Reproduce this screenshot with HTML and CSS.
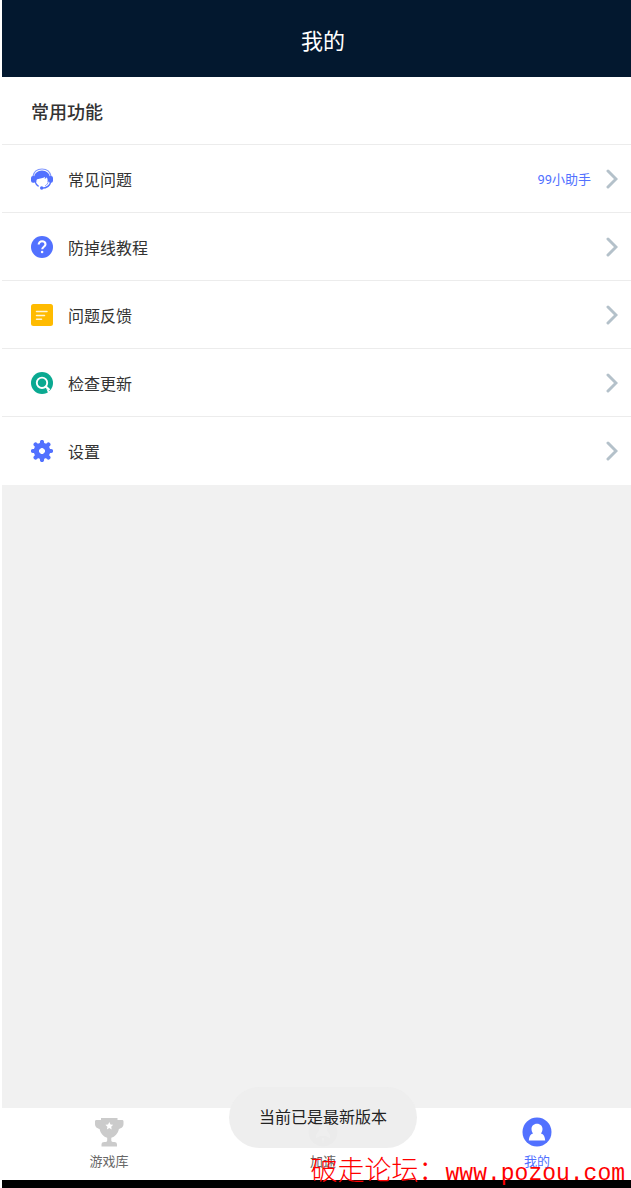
FILE: index.html
```html
<!DOCTYPE html>
<html lang="zh-CN">
<head>
    <meta charset="UTF-8">
    <meta name="viewport" content="width=device-width, initial-scale=1.0">
    <title>我的</title>
    <link rel="stylesheet" href="styles.css">
</head>
<body>
    <div class="screen">
        <header class="topbar">
            <h1>我的</h1>
        </header>
        <main class="content">
            <section class="menu">
                <h2 class="menu-title">常用功能</h2>
                <a class="menu-item" href="#faq">
                    <svg class="icon" viewBox="0 0 22 22">
                        <path d="M1.900 8.500C2.800 3.600 6.500 1 11 1s8.200 2.600 9.100 7.500" fill="none" stroke="#7f96ff" stroke-width="1.200"/>
                        <path d="M3 14V9.600C3.200 5.300 6.800 2.400 11 2.400s7.800 2.900 8 7.200V14h-2.400c.3-2-.1-3.400-.9-4.800-.5 1-1.400 1.600-2.200 1.500.4-.5.600-1.100.5-1.700-2 1.400-5 1.500-7.800 2.300-.7.700-1 1.700-.8 2.700z" fill="#5271ff"/>
                        <rect x="0" y="8" width="4.600" height="6.800" rx="2" fill="#5271ff"/>
                        <rect x="17.400" y="8" width="4.600" height="6.800" rx="2" fill="#5271ff"/>
                        <path d="M4 13.500c.7 2.300 2 3.900 3.600 4.900M19.700 14c-.8 3.600-4 6-8.700 6.200" fill="none" stroke="#5271ff" stroke-width="1.300"/>
                        <path d="M17.400 13c-.4 2.400-1.600 4-3.400 5" fill="none" stroke="#8ba0ff" stroke-width="1"/>
                        <circle cx="10.700" cy="20" r="1.700" fill="#5271ff"/>
                    </svg>
                    <span class="label">常见问题</span>
                    <span class="hint">99小助手</span>
                    <svg class="arrow" viewBox="0 0 12 20"><path d="M2 2l8 8-8 8"/></svg>
                </a>
                <a class="menu-item" href="#guide">
                    <svg class="icon" viewBox="0 0 22 22">
                        <circle cx="11" cy="11" r="11" fill="#5271ff"/>
                        <path d="M7.700 8.600c0-2.100 1.400-3.300 3.400-3.300s3.400 1.200 3.400 3c0 2.400-3.300 2.500-3.300 5" fill="none" stroke="#fff" stroke-width="2.100"/>
                        <circle cx="11.100" cy="16" r="1.300" fill="#fff"/>
                    </svg>
                    <span class="label">防掉线教程</span>
                    <svg class="arrow" viewBox="0 0 12 20"><path d="M2 2l8 8-8 8"/></svg>
                </a>
                <a class="menu-item" href="#feedback">
                    <svg class="icon" viewBox="0 0 22 22">
                        <rect width="22" height="22" rx="2.500" fill="#ffbb00"/>
                        <path d="M5.500 7.500h10.500M5.500 11.400h8M5.500 15.200h5" fill="none" stroke="#fff5d8" stroke-width="1.500" stroke-linecap="round"/>
                    </svg>
                    <span class="label">问题反馈</span>
                    <svg class="arrow" viewBox="0 0 12 20"><path d="M2 2l8 8-8 8"/></svg>
                </a>
                <a class="menu-item" href="#update">
                    <svg class="icon" viewBox="0 0 22 22">
                        <circle cx="11" cy="11" r="11" fill="#0aa991"/>
                        <circle cx="11" cy="10.800" r="5.200" fill="none" stroke="#fff" stroke-width="1.900"/>
                        <path d="M14.500 14.300l4 3.800" stroke="#fff" stroke-width="2.200"/>
                        <path d="M15.500 17l2 5h4.500l-1-3.500-2.500.5z" fill="#fff"/>
                    </svg>
                    <span class="label">检查更新</span>
                    <svg class="arrow" viewBox="0 0 12 20"><path d="M2 2l8 8-8 8"/></svg>
                </a>
                <a class="menu-item" href="#settings">
                    <svg class="icon" viewBox="0 0 22 22">
                        <g fill="none" stroke="#5271ff">
                            <path d="M11 2v4M11 16v4M2 11h4M16 11h4M4.600 4.600l3 3M14.400 14.400l3 3M4.600 17.400l3-3M14.400 7.600l3-3" stroke-width="4.200" stroke-linecap="round"/>
                            <circle cx="11" cy="11" r="5.700" stroke-width="5.200"/>
                        </g>
                    </svg>
                    <span class="label">设置</span>
                    <svg class="arrow" viewBox="0 0 12 20"><path d="M2 2l8 8-8 8"/></svg>
                </a>
            </section>
        </main>
        <footer class="bottom">
            <nav class="tabbar">
                <a class="tab" href="#games">
                    <svg class="tab-icon" viewBox="0 0 30 30">
                        <path d="M7 .9h16.500v2h4.500c1 0 1.500.5 1.500 1.500v2.400c0 3.500-2.400 4.600-4.600 5.100-.9 4.600-4.100 7.800-7.600 8.800v2.800c0 1.300 1 1.500 3 1.500 1.500 0 2.700.8 2.700 2.500v2H7.500v-2c0-1.700 1.200-2.500 2.700-2.500 2 0 3-.2 3-1.500v-2.800c-3.500-1-6.700-4.200-7.600-8.800C3.400 11.400 1 10.300 1 6.800V4.400c0-1 .5-1.500 1.500-1.500H7z" fill="#cbcbcb"/>
                        <path d="M15.300 4.900l1.200 2.500 2.700.4-2 1.900.5 2.700-2.400-1.300-2.400 1.300.5-2.700-2-1.900 2.700-.4z" fill="#fff"/>
                    </svg>
                    <span>游戏库</span>
                </a>
                <a class="tab" href="#boost">
                    <svg class="tab-icon" viewBox="0 0 30 30">
                        <circle cx="15" cy="15" r="14.500" fill="#cbcbcb"/>
                        <path d="M15 5c3 2.200 4 5.200 4 8.500l3 4.500v3l-4-2h-6l-4 2v-3l3-4.500c0-3.300 1-6.300 4-8.500zM14 21h2l-1 5z" fill="#fff"/>
                    </svg>
                    <span>加速</span>
                </a>
                <a class="tab active" href="#mine">
                    <svg class="tab-icon" viewBox="0 0 30 30">
                        <circle cx="15" cy="15" r="14.500" fill="#5271ff"/>
                        <path d="M15 6.800c3.300 0 5.500 2.300 5.500 5.300 0 1.900-.7 3.200-1.500 4.300 2.600.8 4 3 4.200 7.200H6.800c.2-4.200 1.600-6.400 4.200-7.200-.8-1.100-1.500-2.400-1.500-4.300 0-3 2.200-5.300 5.500-5.300z" fill="#fff"/>
                    </svg>
                    <span>我的</span>
                </a>
            </nav>
            <div class="toast" role="status">当前已是最新版本</div>
        </footer>
    </div>
    <p class="watermark">破走论坛：<span class="site">www.pozou.com</span></p>
</body>
</html>
```
FILE: styles.css
```css
* {
    box-sizing: border-box;
}
body {
    position: relative;
    margin: 0;
    min-height: 100vh;
    overflow: hidden;
    display: flex;
    flex-direction: column;
    background-color: #fff;
    color: #333;
    font-family: Roboto, "Noto Sans CJK SC", sans-serif;
    font-size: 16px;
}
a {
    color: inherit;
    text-decoration: none;
}
/* the screen runs slightly past the right edge */
.screen {
    flex: 1;
    display: flex;
    flex-direction: column;
    margin-left: 2px;
    margin-right: -13px;
}
.topbar {
    display: flex;
    justify-content: center;
    align-items: center;
    height: 77px;
    background-color: #03182f;
    color: #fff;
}
.topbar h1 {
    margin: 0;
    font-size: 22px;
    font-weight: 400;
}
.content {
    flex: 1;
    background-color: #f1f1f1;
}
.menu {
    background-color: #fff;
}
.menu-title,
.menu-item {
    display: flex;
    align-items: center;
    height: 68px;
    margin: 0;
    padding: 0 26px 0 29px;
    border-bottom: 1px solid #ececec;
}
.menu-title {
    font-size: 18px;
    font-weight: 500;
}
.menu-item {
    gap: 15px;
}
.menu-item:last-child {
    border-bottom: none;
}
.icon {
    width: 22px;
    height: 22px;
}
.label {
    flex: 1;
}
.hint {
    font-size: 13px;
    color: #5271ff;
}
.arrow {
    width: 12px;
    height: 20px;
    fill: none;
    stroke: #b4c1ca;
    stroke-width: 3;
    stroke-linecap: round;
}
.bottom {
    position: relative;
    border-bottom: 8px solid #000;
    background-color: #fff;
}
.tabbar {
    display: flex;
    height: 72px;
}
.tab {
    flex: 1;
    display: flex;
    flex-direction: column;
    align-items: center;
    gap: 5px;
    padding-top: 9px;
    font-size: 13px;
    line-height: 20px;
    color: #666;
}
.tab.active {
    color: #5271ff;
}
.tab-icon {
    width: 30px;
    height: 30px;
}
.toast {
    position: absolute;
    left: 50%;
    bottom: 32px;
    transform: translateX(-50%);
    padding: 0 30px;
    border-radius: 31px;
    background-color: rgba(237, 237, 237, 0.94);
    color: #222;
    line-height: 61px;
    white-space: nowrap;
}
.watermark {
    position: absolute;
    right: 6px;
    bottom: -2px;
    margin: 0;
    font-family: "Liberation Mono", "Noto Sans CJK SC", monospace;
    font-size: 27px;
    font-weight: 300;
    line-height: 32px;
    color: #f00;
    white-space: nowrap;
}
.site {
    font-size: 23px;
}
```
